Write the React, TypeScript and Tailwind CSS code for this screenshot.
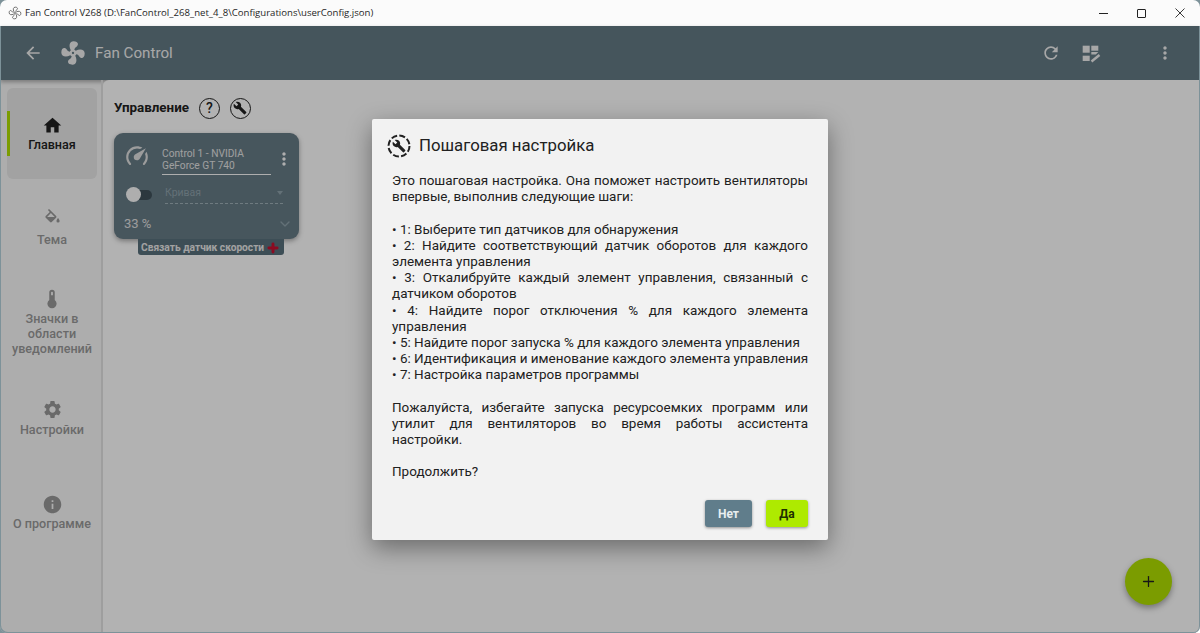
import { MdArrowBack, MdBuild, MdHome, MdInfo, MdMoreVert, MdRefresh, MdSettings } from "react-icons/md";
import { ChevronDown, Plus } from "lucide-react";
import type { ReactNode } from "react";

const fanPath =
  "M12,11A1,1 0 0,0 11,12A1,1 0 0,0 12,13A1,1 0 0,0 13,12A1,1 0 0,0 12,11M12.5,2C17,2 17.11,5.57 14.75,6.75C13.76,7.24 13.32,8.29 13.13,9.22C13.61,9.42 14.03,9.73 14.35,10.13C18.05,8.13 22.03,8.92 22.03,12.5C22.03,17 18.46,17.1 17.28,14.73C16.78,13.74 15.72,13.3 14.79,13.11C14.59,13.59 14.28,14 13.88,14.34C15.87,18.03 15.08,22 11.5,22C7,22 6.91,18.42 9.27,17.24C10.25,16.75 10.69,15.71 10.89,14.79C10.4,14.59 9.97,14.27 9.65,13.87C5.96,15.85 2,15.07 2,11.5C2,7 5.56,6.89 6.74,9.26C7.24,10.25 8.29,10.68 9.22,10.87C9.41,10.39 9.73,9.97 10.14,9.65C8.15,5.96 8.94,2 12.5,2Z";

const gaugePath =
  "M12,16A3,3 0 0,1 9,13C9,11.88 9.61,10.9 10.5,10.39L20.21,4.77L14.68,14.35C14.18,15.33 13.17,16 12,16M12,3C13.81,3 15.5,3.5 16.97,4.32L14.87,5.53C14,5.19 13,5 12,5A8,8 0 0,0 4,13C4,15.21 4.89,17.21 6.34,18.65H6.35C6.74,19.04 6.74,19.67 6.35,20.06C5.96,20.45 5.32,20.45 4.93,20.07V20.07C3.12,18.26 2,15.76 2,13A10,10 0 0,1 12,3M22,13C22,15.76 20.88,18.26 19.07,20.07V20.07C18.68,20.45 18.05,20.45 17.66,20.06C17.27,19.67 17.27,19.04 17.66,18.65V18.65C19.11,17.2 20,15.2 20,13C20,12 19.81,11 19.46,10.1L20.67,8C21.5,9.5 22,11.18 22,13Z";

const bucketPath =
  "M19,11.5C19,11.5 17,13.67 17,15A2,2 0 0,0 19,17A2,2 0 0,0 21,15C21,13.67 19,11.5 19,11.5M5.21,10L10,5.21L14.79,10M16.56,8.94L7.62,0L6.21,1.41L8.59,3.79L3.44,8.94C2.85,9.5 2.85,10.47 3.44,11.06L8.94,16.56C9.23,16.85 9.62,17 10,17C10.38,17 10.77,16.85 11.06,16.56L16.56,11.06C17.15,10.47 17.15,9.5 16.56,8.94Z";

const thermometerPath = "M15 13V5A3 3 0 0 0 9 5V13A5 5 0 1 0 15 13M12 4A1 1 0 0 1 13 5V8H11V5A1 1 0 0 1 12 4Z";

function NavItem({ icon, label, active, className }: { icon: ReactNode; label: ReactNode; active?: boolean; className?: string }) {
  return (
    <div
      className={`relative flex h-[91px] flex-col items-center justify-center rounded-md text-center text-[12.6px] font-medium leading-[15px] ${
        active ? "bg-[#e8e8e8] text-[#212121]" : "text-[#989898]"
      } ${className ?? ""}`}
    >
      {active && <div className="absolute left-0 top-[23px] h-[45px] w-[3px] bg-[#b0e000]" />}
      {icon}
      {label}
    </div>
  );
}

export default function App() {
  return (
    <div className="relative flex h-[633px] w-[1200px] flex-col overflow-hidden bg-[#7d9299] font-['Roboto',sans-serif]">
      {/* title bar */}
      <div className="flex h-[26px] shrink-0 items-center rounded-t-[7px] bg-[#fbfbfb] pl-[8px] pr-[1px] text-[#1f1f1f]">
        <svg viewBox="0 0 24 24" className="mr-[3px] h-[14px] w-[14px]" fill="none" stroke="#555" strokeWidth="1.4">
          <path d={fanPath} />
        </svg>
        <span className="font-['Open_Sans',sans-serif] text-[9.6px]">Fan Control V268 (D:\FanControl_268_net_4_8\Configurations\userConfig.json)</span>
        <div className="ml-auto flex items-center">
          <div className="flex w-[38px] justify-center">
            <div className="h-[1px] w-[9px] bg-[#222]" />
          </div>
          <div className="flex w-[39px] justify-center">
            <div className="h-[9px] w-[9px] rounded-[1px] border border-[#222]" />
          </div>
          <div className="flex w-[38px] justify-center">
            <svg viewBox="0 0 10 10" className="h-[10px] w-[10px]" stroke="#222" strokeWidth="0.9">
              <path d="M0.5 0.5L9.5 9.5M9.5 0.5L0.5 9.5" />
            </svg>
          </div>
        </div>
      </div>

      <div className="relative flex min-h-0 flex-1 flex-col rounded-b-[7px] bg-[#f8f8f8]">
        {/* app bar */}
        <div className="flex h-[54px] shrink-0 items-center bg-[#647a85] pl-[23px] text-[#f0f0f0] shadow-[0_2px_4px_rgba(0,0,0,0.3)]">
          <MdArrowBack className="h-[20px] w-[20px]" />
          <svg viewBox="0 0 24 24" className="ml-[16px] h-[28px] w-[28px]" fill="currentColor">
            <path d={fanPath} />
          </svg>
          <span className="ml-[8px] mt-[1px] text-[15.2px]">Fan Control</span>
          <div className="ml-auto flex items-center">
            <MdRefresh className="h-[20px] w-[20px]" />
            <svg viewBox="0 0 20 20" className="ml-[21px] h-[20px] w-[20px]" fill="currentColor">
              <rect x="0.7" y="2.7" width="7" height="7" />
              <rect x="0.7" y="12.7" width="7" height="5.3" />
              <rect x="9.3" y="2.7" width="7" height="5" />
              <path d="M9.3 9h7l-2.5 2.5H9.3z" />
              <path d="M9.5 18.5L17.5 12" fill="none" stroke="currentColor" strokeWidth="2.4" />
            </svg>
            <MdMoreVert className="ml-[53px] mr-[25px] h-[20px] w-[20px]" />
          </div>
        </div>

        <div className="flex min-h-0 flex-1">
          {/* sidebar */}
          <div className="w-[103px] shrink-0 border-r-2 border-[#e2e2e2] pl-[7px] pr-[4px] pt-[8px]">
            <NavItem active icon={<MdHome className="mb-[2px] h-[21px] w-[21px]" />} label={<span className="-mt-[1px] mb-[1px]">Главная</span>} />
            <NavItem
              className="mt-[3px]"
              icon={
                <svg viewBox="0 0 24 24" className="mb-[4px] h-[19px] w-[19px]" fill="currentColor">
                  <path d={bucketPath} />
                </svg>
              }
              label="Тема"
            />
            <NavItem
              className="mt-[3px]"
              icon={
                <svg viewBox="0 0 24 24" className="mb-[1px] h-[22px] w-[22px]" fill="currentColor">
                  <path d={thermometerPath} />
                </svg>
              }
              label={<span>Значки в<br />области<br />уведомлений</span>}
            />
            <NavItem className="mt-[5px]" icon={<MdSettings className="mb-[2px] h-[21px] w-[21px]" />} label="Настройки" />
            <NavItem className="mt-[4px]" icon={<MdInfo className="mb-[1px] h-[21px] w-[21px]" />} label="О программе" />
          </div>

          {/* main */}
          <div className="min-w-0 flex-1 rounded-tl-md bg-white pl-[11px] pt-[16px]">
            <div className="flex h-[24px] items-center text-[#212121]">
              <span className="mt-[1px] text-[13.4px] font-bold">Управление</span>
              <div className="ml-[10px] flex h-[21px] w-[21px] items-center justify-center rounded-full border-[1.5px] border-[#212121] text-[14px] font-medium">?</div>
              <div className="ml-[10px] flex h-[21px] w-[21px] items-center justify-center rounded-full border-[1.5px] border-[#212121]">
                <MdBuild className="h-[14px] w-[14px]" />
              </div>
            </div>

            {/* control card */}
            <div className="mt-[13px] w-[185px]">
              <div className="flex h-[106px] flex-col rounded-[9px] bg-[#667b86] pl-[10px] pr-[5px] pt-[10px] text-[#fafafa] shadow-[0_2px_5px_rgba(0,0,0,0.35)]">
                <div className="flex items-start">
                  <svg viewBox="0 0 24 24" className="h-[26px] w-[26px] shrink-0 text-[#e0e0e0]" fill="currentColor">
                    <path d={gaugePath} />
                  </svg>
                  <div className="ml-[12px] w-[109px] shrink-0 border-b border-[#fafafa] pb-[2px] pt-[5px] text-[10.2px] leading-[12px] text-[#e4e4e4]">
                    Control 1 - NVIDIA<br />GeForce GT 740
                  </div>
                  <MdMoreVert className="ml-[3px] mt-[6px] h-[20px] w-[20px] shrink-0" />
                </div>
                <div className="mt-[10px] flex items-center">
                  <div className="relative ml-[3px] h-[10px] w-[25px] shrink-0 rounded-full bg-[#3f515a]">
                    <div className="absolute -left-[1px] -top-[3px] h-[15px] w-[15px] rounded-full bg-[#fafafa]" />
                  </div>
                  <div className="ml-[13px] flex h-[19px] w-[118px] items-center justify-between border-b border-dashed border-[#9fb0b8] pb-[3px] text-[10.5px] text-[#8fa2ab]">
                    Кривая
                    <div className="h-0 w-0 border-x-[3.5px] border-t-[4px] border-x-transparent border-t-[#8fa2ab]" />
                  </div>
                </div>
                <div className="mt-[10px] flex items-center justify-between pr-[1px] text-[13px] text-[#e0e0e0]">
                  33 %
                  <ChevronDown className="h-[16px] w-[16px] text-[#8fa2ab]" />
                </div>
              </div>
              <div className="ml-[24px] flex h-[16px] w-[146px] items-center justify-between rounded-b-[3px] bg-[#58707c] pl-[3px] pr-[4px] pt-[1px] text-[10.2px] font-bold text-[#e8e8e8]">
                Связать датчик скорости
                <Plus className="h-[14px] w-[14px] text-[#c81030]" strokeWidth={5} />
              </div>
            </div>
          </div>
        </div>

        <div className="absolute bottom-[28px] right-[28px] flex h-[47px] w-[47px] items-center justify-center rounded-full bg-[#b0e000] text-[#212121] shadow-[0_3px_6px_rgba(0,0,0,0.35)]">
          <Plus className="h-[17px] w-[17px]" strokeWidth={1.8} />
        </div>

        {/* modal overlay */}
        <div className="absolute inset-0 rounded-b-[7px] bg-black/30 shadow-[inset_1px_-1px_0_#7d9299,inset_-1px_0_0_#7d9299]">
          <div className="absolute left-[372px] top-[93px] flex h-[421px] w-[456px] flex-col rounded-[2px] bg-[#f2f2f2] px-[20px] pt-[15px] text-[#212121] shadow-[0_8px_24px_rgba(0,0,0,0.4)]">
            <div className="flex items-center">
              <div className="relative -ml-[5px] flex h-[24px] w-[24px] items-center justify-center">
                <svg viewBox="0 0 24 24" className="absolute inset-0 h-[24px] w-[24px]" fill="none" stroke="#212121" strokeWidth="2">
                  <circle cx="12" cy="12" r="10.5" strokeDasharray="6 2.25" />
                </svg>
                <MdBuild className="h-[14px] w-[14px]" />
              </div>
              <span className="-mt-[1px] ml-[8px] text-[16.8px]">Пошаговая настройка</span>
            </div>
            <div className="mt-[14px] text-justify text-[13.48px] leading-[16.2px]">
              <p>Это пошаговая настройка. Она поможет настроить вентиляторы впервые, выполнив следующие шаги:</p>
              <p className="mt-[16px]">• 1: Выберите тип датчиков для обнаружения</p>
              <p>• 2: Найдите соответствующий датчик оборотов для каждого элемента управления</p>
              <p>• 3: Откалибруйте каждый элемент управления, связанный с датчиком оборотов</p>
              <p>• 4: Найдите порог отключения % для каждого элемента управления</p>
              <p>• 5: Найдите порог запуска % для каждого элемента управления</p>
              <p className="whitespace-nowrap">• 6: Идентификация и именование каждого элемента управления</p>
              <p>• 7: Настройка параметров программы</p>
              <p className="mt-[16px]">Пожалуйста, избегайте запуска ресурсоемких программ или утилит для вентиляторов во время работы ассистента настройки.</p>
              <p className="mt-[16px]">Продолжить?</p>
            </div>
            <div className="mb-[13px] mt-auto flex justify-end gap-[14px] text-[12px] font-bold">
              <div className="flex h-[27px] w-[47px] items-center justify-center rounded-[3px] bg-[#607d8b] text-[#e8eef0] shadow-[0_1px_3px_rgba(0,0,0,0.4)]">Нет</div>
              <div className="flex h-[27px] w-[42px] items-center justify-center rounded-[3px] bg-[#aeea00] text-[#1e3000] shadow-[0_1px_3px_rgba(0,0,0,0.4)]">Да</div>
            </div>
          </div>
        </div>
      </div>
    </div>
  );
}
